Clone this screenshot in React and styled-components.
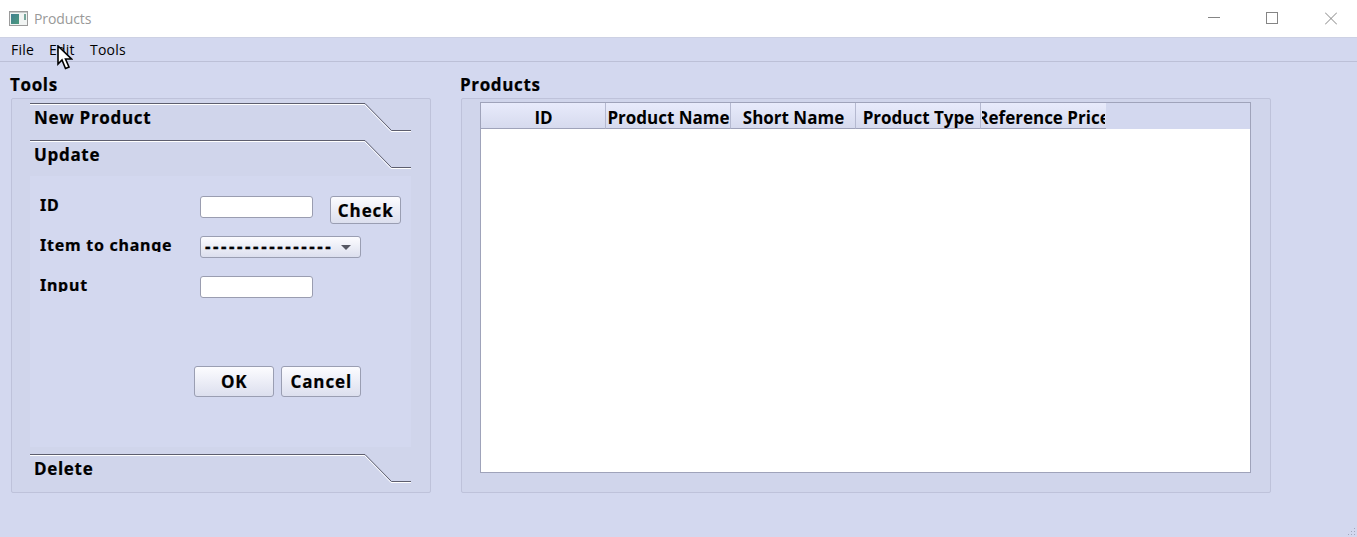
import React from 'react';
import styled, { createGlobalStyle } from 'styled-components';

const Global = createGlobalStyle`
  * { box-sizing: border-box; }
  body { margin: 0; background: #d3d8ef; }
`;

const Window = styled.div`
  width: 1357px;
  height: 537px;
  overflow: hidden;
  display: flex;
  flex-direction: column;
  background: #d3d8ef;
  color: #000;
  font-family: 'Noto Sans', 'Open Sans', sans-serif;
  position: relative;
`;

const TitleBar = styled.header`
  height: 37px;
  flex: none;
  display: flex;
  align-items: center;
  background: #fff;
  padding: 0 20px 0 9px;
`;

const AppTitle = styled.span`
  flex: 1;
  margin-left: 6px;
  color: #999;
  font: 400 14px/20px 'Open Sans', sans-serif;
  letter-spacing: -0.1px;
`;

const WindowControls = styled.div`
  display: flex;
  gap: 46px;
  svg { display: block; }
`;

const MenuBar = styled.nav`
  height: 25px;
  flex: none;
  display: flex;
  gap: 15px;
  padding-left: 11px;
  border-top: 1px solid #cdd1e4;
  border-bottom: 1px solid #bcc0d7;
`;

const MenuItem = styled.span`
  width: ${(p) => p.$width}px;
  white-space: nowrap;
  font: 400 14px/23px 'Open Sans', sans-serif;
  letter-spacing: 0.2px;
`;

const Main = styled.main`
  display: flex;
  gap: 30px;
  padding: 12px 0 0 11px;
`;

const Section = styled.section`
  width: ${(p) => p.$width}px;
`;

const SectionTitle = styled.h2`
  margin: 0 0 0 -1px;
  height: 24px;
  font: 700 17px/22px 'Open Sans', sans-serif;
  letter-spacing: 0.65px;
  -webkit-text-stroke: 0.2px #000;
`;

const GroupBox = styled.div`
  height: 395px;
  border: 1px solid #bec2da;
  border-radius: 2px;
  background: #d0d5eb;
  padding: ${(p) => p.$pad};
`;

const Tab = styled.div`
  height: 28px;
  display: grid;
  & > * { grid-area: 1 / 1; }
  & + & { margin-top: 9px; }
  svg { display: block; }
`;

const TabLabel = styled.span`
  padding-left: 4px;
  font: 700 17px/30px 'Open Sans', sans-serif;
  letter-spacing: 0.68px;
  -webkit-text-stroke: 0.2px #000;
`;

const ToolBox = styled.div`
  display: flex;
  flex-direction: column;
`;

const Page = styled.form`
  height: 271px;
  margin: 8px 0 7px;
  padding: 20px 0 0 10px;
  background: #d3d8ef;
`;

const Row = styled.div`
  height: 40px;
  display: flex;
  align-items: flex-start;
`;

const FieldLabel = styled.label`
  width: 160px;
  height: 16px;
  overflow: hidden;
  white-space: nowrap;
  font: 700 16px/19px 'Noto Sans', sans-serif;
  letter-spacing: 0.75px;
  -webkit-text-stroke: 0.2px #000;
`;

const Field = styled.input`
  width: 113px;
  height: 22px;
  border: 1px solid #9a9db0;
  border-radius: 3px;
  background: #fff;
  padding: 0 4px;
  outline: none;
`;

const Button = styled.button`
  width: ${(p) => p.$width}px;
  height: ${(p) => p.$height}px;
  padding: 1px 0 0;
  border: 1px solid #9a9eb2;
  border-radius: 3px;
  background: linear-gradient(#fcfcff, #dcdfee);
  color: #000;
  white-space: nowrap;
  font: 700 17px/24px 'Open Sans', sans-serif;
  letter-spacing: 0.9px;
  text-indent: 0.5px;
  -webkit-text-stroke: 0.2px #000;
`;

const CheckSlot = styled.div`
  margin-left: 17px;
  display: flex;
`;

const Select = styled.div`
  width: 161px;
  height: 22px;
  display: flex;
  align-items: center;
  justify-content: space-between;
  border: 1px solid #9a9eb2;
  border-radius: 3px;
  background: linear-gradient(#fcfcff, #dcdfee);
  padding: 0 9px 0 4px;
  overflow: hidden;
  font: 700 17px/20px 'Open Sans', sans-serif;
  letter-spacing: 2.55px;
  -webkit-text-stroke: 0.3px #000;
`;

const Actions = styled.div`
  display: flex;
  gap: 7px;
  padding: 50px 0 0 154px;
`;

const Table = styled.div`
  width: 771px;
  height: 371px;
  border: 1px solid #9fa3ba;
  background: #fff;
`;

const HeaderRow = styled.div`
  height: 26px;
  display: flex;
  background: #d3d8ef;
`;

const HeaderCell = styled.div`
  width: 125px;
  padding: 0 ${(p) => (p.$last ? 1 : 0)}px 0 1px;
  border-right: ${(p) => (p.$last ? 'none' : '1px solid #b5b9d0')};
  border-bottom: 1px solid #9fa3ba;
  background: linear-gradient(#e8ebfb, #d6daee);
  display: flex;
`;

const HeaderText = styled.span`
  flex: 1;
  min-width: 0;
  overflow: hidden;
  display: flex;
  justify-content: center;
  white-space: nowrap;
  font: 700 17px/29px 'Open Sans', sans-serif;
`;

const Pointer = styled.svg`
  position: absolute;
  left: 57px;
  top: 45px;
`;

const SizeGrip = styled.svg`
  position: absolute;
  right: 0;
  bottom: 0;
`;

function ToolTab({ label }) {
  return (
    <Tab>
      <svg width="381" height="29" viewBox="0 0 381 29" fill="none">
        <path d="M0 1.5H334.5L361 28.5H381" stroke="#fff" />
        <path d="M0 .5H335L361.5 27.5H381" stroke="#5d5e6e" />
      </svg>
      <TabLabel>{label}</TabLabel>
    </Tab>
  );
}

const columns = ['ID', 'Product Name', 'Short Name', 'Product Type', 'Reference Price'];

export default function App() {
  return (
    <Window>
      <Global />
      <TitleBar>
        <svg width="19" height="15" viewBox="0 0 19 15">
          <defs>
            <linearGradient id="pane" x1="0" y1="0" x2="1" y2="1">
              <stop offset="0" stopColor="#3f7f91" />
              <stop offset="1" stopColor="#4c9a7c" />
            </linearGradient>
          </defs>
          <rect x=".5" y=".5" width="18" height="14" fill="#f1f4f3" stroke="#9b9b9b" />
          <path d="M1 1.5H18" stroke="#c8cccc" />
          <rect x="2" y="3" width="8" height="10" fill="url(#pane)" />
          <rect x="15" y="3" width="2" height="6" fill="#76a69b" />
        </svg>
        <AppTitle>Products</AppTitle>
        <WindowControls>
          <svg width="12" height="13" fill="none" stroke="#858585"><path d="M0 5.5H12" /></svg>
          <svg width="13" height="13" fill="none" stroke="#858585"><rect x=".5" y=".5" width="11" height="11" /></svg>
          <svg width="12" height="13" fill="none" stroke="#858585"><path d="M0 .5L12 12.5M12 .5L0 12.5" /></svg>
        </WindowControls>
      </TitleBar>
      <MenuBar>
        <MenuItem $width={23}>File</MenuItem>
        <MenuItem $width={26}>Edit</MenuItem>
        <MenuItem $width={36}>Tools</MenuItem>
      </MenuBar>
      <Main>
        <Section $width={420}>
          <SectionTitle>Tools</SectionTitle>
          <GroupBox $pad="4px 19px 0 18px">
            <ToolBox>
              <ToolTab label="New Product" />
              <ToolTab label="Update" />
              <Page>
                <Row>
                  <FieldLabel>ID</FieldLabel>
                  <Field />
                  <CheckSlot><Button type="button" $width={71} $height={28}>Check</Button></CheckSlot>
                </Row>
                <Row>
                  <FieldLabel>Item to change</FieldLabel>
                  <Select>
                    <span>----------------</span>
                    <svg width="10" height="5"><path d="M0 0H10L5 5Z" fill="#555763" /></svg>
                  </Select>
                </Row>
                <Row>
                  <FieldLabel>Input</FieldLabel>
                  <Field />
                </Row>
                <Actions>
                  <Button type="button" $width={80} $height={31}>OK</Button>
                  <Button type="button" $width={80} $height={31}>Cancel</Button>
                </Actions>
              </Page>
              <ToolTab label="Delete" />
            </ToolBox>
          </GroupBox>
        </Section>
        <Section $width={810}>
          <SectionTitle>Products</SectionTitle>
          <GroupBox $pad="3px 18px">
            <Table>
              <HeaderRow>
                {columns.map((name, i) => (
                  <HeaderCell key={name} $last={i === columns.length - 1}>
                    <HeaderText><span>{name}</span></HeaderText>
                  </HeaderCell>
                ))}
              </HeaderRow>
            </Table>
          </GroupBox>
        </Section>
      </Main>
      <Pointer width="16" height="25" viewBox="0 0 16 25">
        <path d="M1 1V19L5 15L8.5 23.5L12 22L8.5 14H14.5Z" fill="#fff" stroke="#000" strokeWidth="1.6" />
      </Pointer>
      <SizeGrip width="9" height="9" fill="#a3a9bd">
        <path d="M6 0h1v1h-1zM3 3h1v1h-1zM6 3h1v1h-1zM0 6h1v1h-1zM3 6h1v1h-1zM6 6h1v1h-1z" />
      </SizeGrip>
    </Window>
  );
}
